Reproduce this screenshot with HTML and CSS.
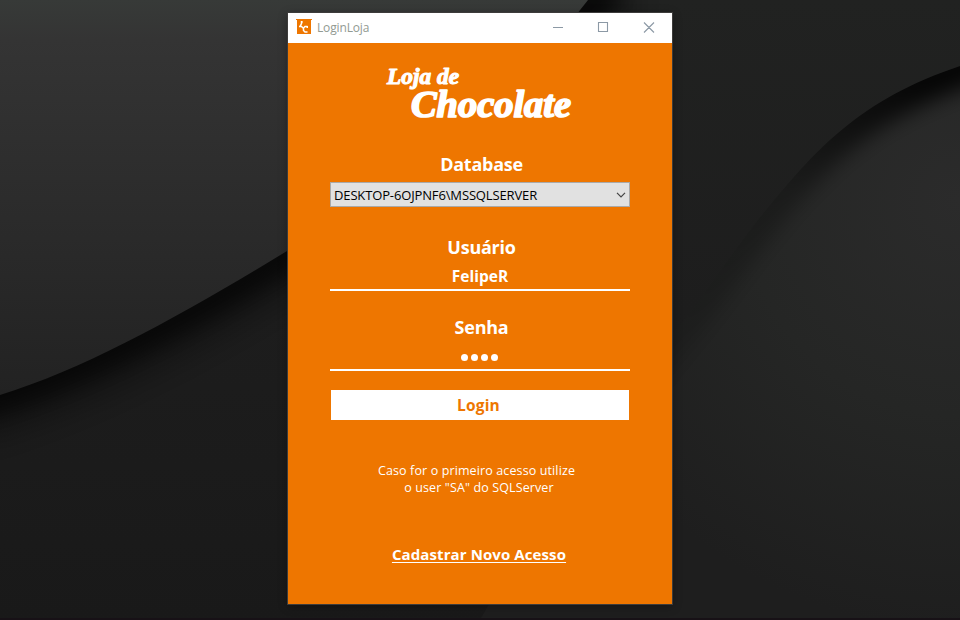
FILE: index.html
```html
<!DOCTYPE html>
<html lang="pt-BR">
<head>
<meta charset="utf-8">
<title>LoginLoja</title>
<link rel="stylesheet" href="styles.css">
</head>
<body>
<svg class="wallpaper" viewBox="0 0 960 620" preserveAspectRatio="none" aria-hidden="true">
  <defs>
    <linearGradient id="sheet" x1="0" y1="0" x2="0" y2="395" gradientUnits="userSpaceOnUse">
      <stop offset="0" stop-color="#373a38"/><stop offset=".1" stop-color="#343434"/><stop offset=".55" stop-color="#2b2b2b"/><stop offset="1" stop-color="#222"/>
    </linearGradient>
    <linearGradient id="middle" x1="0" y1="0" x2="0" y2="620" gradientUnits="userSpaceOnUse">
      <stop offset="0" stop-color="#212221"/><stop offset=".5" stop-color="#1d1d1d"/><stop offset="1" stop-color="#191919"/>
    </linearGradient>
    <radialGradient id="right" cx="960" cy="200" r="430" gradientUnits="userSpaceOnUse">
      <stop offset="0" stop-color="#2b2b2b"/><stop offset=".5" stop-color="#252625"/><stop offset="1" stop-color="#1e1e1e"/>
    </radialGradient>
    <linearGradient id="fade" x1="680" y1="330" x2="930" y2="90" gradientUnits="userSpaceOnUse">
      <stop offset="0" stop-color="#000" stop-opacity=".15"/><stop offset=".5" stop-color="#000" stop-opacity=".3"/><stop offset="1" stop-color="#000" stop-opacity=".85"/>
    </linearGradient>
    <filter id="soft" x="-20%" y="-20%" width="140%" height="140%"><feGaussianBlur stdDeviation="10"/></filter>
    <filter id="wide" x="-20%" y="-30%" width="140%" height="160%"><feGaussianBlur stdDeviation="18"/></filter>
    <clipPath id="rightClip"><path d="M480 620C560 480 620 400 673 334C700 302 740 240 770 205C815 151 860 99 960 66V620Z"/></clipPath>
  </defs>
  <rect width="960" height="620" fill="url(#middle)"/>
  <g clip-path="url(#rightClip)">
    <rect width="960" height="620" fill="url(#right)"/>
    <path d="M620 400L673 334C700 302 740 240 770 205C815 151 860 99 980 60" fill="none" stroke="url(#fade)" stroke-width="42" filter="url(#soft)"/>
  </g>
  <path d="M-40 406C80 372 190 310 287 251C400 180 520 100 610 -20" fill="none" stroke="#000" stroke-opacity=".4" stroke-width="70" filter="url(#wide)"/>
  <path d="M-40 406C80 372 190 310 287 251C400 180 520 100 610 -20" fill="none" stroke="#000" stroke-opacity=".55" stroke-width="36" filter="url(#soft)"/>
  <path d="M0 0H588C510 100 400 180 287 251C190 310 90 367 0 395Z" fill="url(#sheet)"/>
  <rect y="618" width="960" height="2" fill="#171116"/>
</svg>

<main class="window">
  <header class="titlebar">
    <svg class="app-icon" width="16" height="16" viewBox="0 0 16 16" aria-hidden="true">
      <path fill="#ee7600" d="M0 0H16V1H15V15H1V1H0Z"/>
      <path fill="none" stroke="#fff" stroke-width="1.5" d="M5.500 2V4.500L4 7.500M3 7.500H5.500L7 9M11.500 7.500H9L7.500 9V11.500L9 13H11.500"/>
      <path fill="#fff" d="M10.500 7h1.500v2h-1.500zM5 2h1.500v2H5z"/>
    </svg>
    <span class="title">LoginLoja</span>
    <svg class="controls" width="138" height="30" viewBox="0 0 138 30" aria-hidden="true">
      <path d="M19 14.500H29M64.500 9.500H73.500V18.500H64.500ZM110 9.500L120 19.500M120 9.500L110 19.500" fill="none" stroke="#8c99a5" stroke-width="1.1"/>
    </svg>
  </header>
  <form class="login">
    <svg class="logo" width="200" height="70" viewBox="0 0 200 70" role="img">
      <text class="brand small" x="7" y="29" font-size="23" textLength="72" lengthAdjust="spacingAndGlyphs">Loja de</text>
      <text class="brand" x="31" y="62" font-size="37" textLength="160" lengthAdjust="spacingAndGlyphs">Chocolate</text>
    </svg>
    <label class="label database">Database</label>
    <div class="select"><span>DESKTOP-6OJPNF6\MSSQLSERVER</span>
      <svg width="10" height="6" viewBox="0 0 10 6" aria-hidden="true"><path d="M1 .8L5 4.800L9 .8" fill="none" stroke="#444" stroke-width="1.200"/></svg>
    </div>
    <label class="label user">Usuário</label>
    <div class="field"><span>FelipeR</span></div>
    <label class="label password">Senha</label>
    <div class="field dots"><i></i><i></i><i></i><i></i></div>
    <button class="submit" type="button"><span>Login</span></button>
    <p class="hint"><span class="h1">Caso for o primeiro acesso utilize</span><span class="h2">o user "SA" do SQLServer</span></p>
    <a class="register">Cadastrar Novo Acesso</a>
  </form>
</main>
</body>
</html>
```
FILE: styles.css
```css
* { box-sizing: border-box; }
body {
  margin: 0;
  height: 620px;
  overflow: hidden;
  background: #1b1b1b;
  font-family: "Open Sans", "Noto Sans", sans-serif;
  display: flex;
  justify-content: center;
}
.wallpaper { position: absolute; inset: 0; width: 960px; height: 620px; }
.window {
  position: relative;
  width: 384px;
  height: 591px;
  margin-top: 13px;
  background: #ee7600;
  box-shadow: 0 0 0 1px #3d3c3b, 0 2px 9px rgba(0, 0, 0, .35);
}
.titlebar {
  height: 30px;
  background: #fff;
  display: flex;
  align-items: center;
  padding-left: 8px;
}
.app-icon { margin-top: -2px; }
.title { margin: -1px 0 0 5px; font-size: 12px; letter-spacing: -.15px; color: #929a92; }
.controls { margin-left: auto; }
.login {
  display: flex;
  flex-direction: column;
  align-items: center;
  color: #fff;
}
.logo { margin-top: 12px; }
.brand {
  font-family: "Liberation Serif", serif;
  font-style: italic;
  font-weight: 700;
  fill: #fff;
  stroke: #fff;
  stroke-width: 1.7px;
  stroke-linejoin: round;
}
.small { stroke-width: 1.1px; }
.label { font-size: 18px; line-height: 24px; font-weight: 700; padding-left: 3px; letter-spacing: -.25px; }
.database { margin-top: 27px; }
.select {
  width: 300px;
  height: 25px;
  margin-top: 6px;
  padding: 0 3px 0 3px;
  border: 1px solid #a9a9a9;
  background: #e1e1e1;
  color: #000;
  font-size: 13px;
  letter-spacing: -.14px;
  display: flex;
  align-items: center;
  justify-content: space-between;
}
.user { margin-top: 28px; }
.field {
  width: 300px;
  height: 32px;
  border-bottom: 2px solid #fff;
  display: flex;
  justify-content: center;
  font-size: 15.5px;
  font-weight: 700;
  line-height: 35px;
}
.password { margin-top: 24px; }
.dots { align-items: center; gap: 3px; padding: 7px 1px 0 0; }
.dots i { width: 7px; height: 7px; border-radius: 50%; background: #fff; }
.submit {
  width: 298px;
  height: 30px;
  margin-top: 19px;
  padding: 0 3px 0 0;
  border: 0;
  background: #fff;
  color: #ee7600;
  font: 700 15.5px/30px "Open Sans", "Noto Sans", sans-serif;
  letter-spacing: .2px;
}
.hint {
  margin: 42px 0 0;
  display: flex;
  flex-direction: column;
  align-items: center;
  font-size: 12.5px;
  letter-spacing: .12px;
  line-height: 17px;
  padding-right: 7px;
}
.h2 { padding-left: 5px; }
.register {
  margin-top: 46px;
  margin-right: 2px;
  font-size: 15px;
  letter-spacing: .1px;
  font-weight: 700;
  line-height: 24px;
  text-decoration: underline;
  text-underline-offset: 2px;
  text-decoration-thickness: 1px;
  text-decoration-skip-ink: none;
}
```
